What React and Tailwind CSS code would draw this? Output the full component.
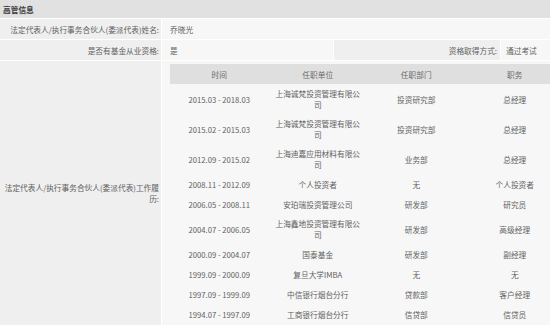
import React from "react";

const rows = [
  ["2015.03 - 2018.03", "上海诚梵投资管理有限公司", "投资研究部", "总经理"],
  ["2015.02 - 2015.03", "上海诚梵投资管理有限公司", "投资研究部", "总经理"],
  ["2012.09 - 2015.02", "上海迪嘉应用材料有限公司", "业务部", "总经理"],
  ["2008.11 - 2012.09", "个人投资者", "无", "个人投资者"],
  ["2006.05 - 2008.11", "安珀瑞投资管理公司", "研发部", "研究员"],
  ["2004.07 - 2006.05", "上海鑫地投资管理有限公司", "研发部", "高级经理"],
  ["2000.09 - 2004.07", "国泰基金", "研发部", "副经理"],
  ["1999.09 - 2000.09", "复旦大学IMBA", "无", "无"],
  ["1997.09 - 1999.09", "中信银行烟台分行", "贷款部", "客户经理"],
  ["1994.07 - 1997.09", "工商银行烟台分行", "信贷部", "信贷员"],
];

export default function App() {
  return (
    <div className="w-[550px] h-[325px] overflow-hidden bg-white flex flex-col gap-px font-['Noto_Sans_CJK_SC',sans-serif] text-[7.7px] leading-[11px] text-[#616161]">
      <div className="h-[18px] shrink-0 bg-[#e1e1e1] px-[3px] flex items-center font-bold text-[#3a3a3a]">
        高管信息
      </div>
      <div className="h-[20px] shrink-0 flex gap-px">
        <div className="w-[161px] shrink-0 bg-[#efefef] flex items-center justify-end pr-[2px]">
          法定代表人/执行事务合伙人(委派代表)姓名:
        </div>
        <div className="flex-1 bg-[#f7f7f7] flex items-center pl-[8px]">乔晓光</div>
      </div>
      <div className="h-[20px] shrink-0 flex gap-px">
        <div className="w-[161px] shrink-0 bg-[#efefef] flex items-center justify-end pr-[2px]">
          是否有基金从业资格:
        </div>
        <div className="w-[171px] shrink-0 bg-[#f7f7f7] flex items-center pl-[8px]">是</div>
        <div className="w-[166px] shrink-0 bg-[#efefef] flex items-center justify-end pr-[3px]">
          资格取得方式:
        </div>
        <div className="flex-1 bg-[#f7f7f7] flex items-center pl-[5px] whitespace-nowrap">通过考试</div>
      </div>
      <div className="flex-1 flex gap-px min-h-0">
        <div className="w-[161px] shrink-0 bg-[#efefef] flex items-center justify-end text-right pr-[2px] pl-[4px]">
          法定代表人/执行事务合伙人(委派代表)工作履历:
        </div>
        <div className="flex-1 bg-[#f7f7f7] pl-[8px] pt-[3px] overflow-hidden">
          <table className="table-fixed w-[394px] border-collapse">
            <thead>
              <tr className="h-[20px] bg-[#dfdfdf] text-[#6a6a6a]">
                <th className="font-normal px-[4px]">时间</th>
                <th className="font-normal px-[4px]">任职单位</th>
                <th className="font-normal px-[4px]">任职部门</th>
                <th className="font-normal px-[4px]">职务</th>
              </tr>
            </thead>
            <tbody>
              {rows.map((r, i) => (
                <tr key={i} className="h-[20px]">
                  {r.map((c, j) => (
                    <td key={j} className="px-[4px] py-[4px] text-center align-middle">
                      {c}
                    </td>
                  ))}
                </tr>
              ))}
            </tbody>
          </table>
        </div>
      </div>
    </div>
  );
}
